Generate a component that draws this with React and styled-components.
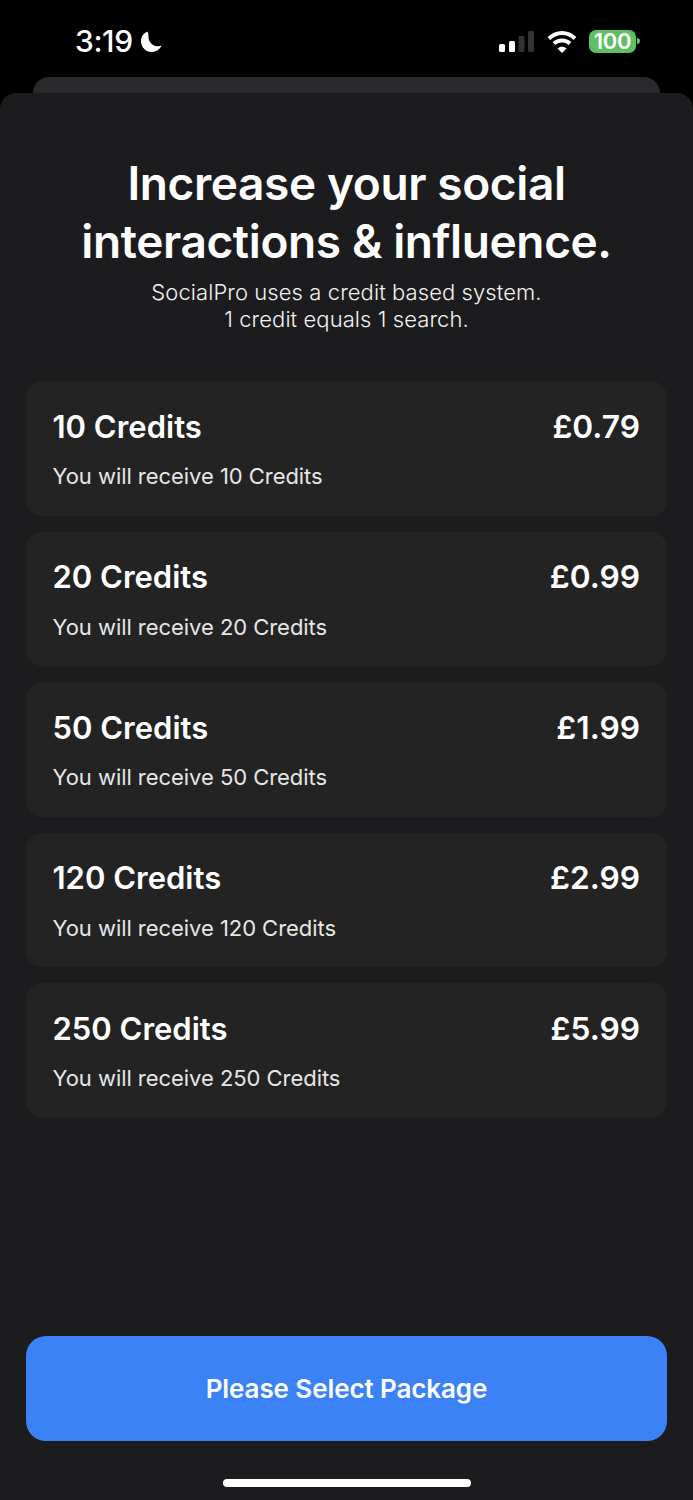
import React from 'react';
import styled, { createGlobalStyle } from 'styled-components';

const GlobalStyle = createGlobalStyle`
    html, body {
        margin: 0;
        padding: 0;
        background: #000;
    }
    * {
        box-sizing: border-box;
    }
`;

const Screen = styled.div`
    width: 693px;
    height: 1500px;
    display: flex;
    flex-direction: column;
    background: #000;
    font-family: Inter, "Liberation Sans", sans-serif;
    color: #fff;
    overflow: hidden;
`;

const StatusBar = styled.div`
    height: 77px;
    flex: none;
    display: flex;
    justify-content: space-between;
    padding: 25px 53px 0 75px;
`;

const StatusLeft = styled.div`
    display: flex;
    align-items: center;
    gap: 8px;
    height: 32px;
`;

const Time = styled.div`
    font-size: 30px;
    font-weight: 500;
    letter-spacing: -0.4px;
`;

const StatusRight = styled.div`
    display: flex;
    align-items: center;
    height: 32px;
    gap: 12.5px;
`;

const Battery = styled.div`
    display: flex;
    align-items: center;
    gap: 1px;
`;

const BatteryBody = styled.div`
    width: 47px;
    height: 23px;
    border-radius: 7px;
    background: #5ec062;
    font-size: 22px;
    font-weight: 600;
    line-height: 23px;
    text-align: center;
    letter-spacing: -0.3px;
`;

const BatteryCap = styled.div`
    width: 3px;
    height: 6px;
    border-radius: 0 3px 3px 0;
    background: #5ec062;
`;

const BackSheet = styled.div`
    height: 16px;
    flex: none;
    margin: 0 33px;
    background: #2a2a2c;
    border-radius: 16px 16px 0 0;
`;

const Sheet = styled.div`
    flex: 1;
    display: flex;
    flex-direction: column;
    background: #1c1c1e;
    border-radius: 16px 16px 0 0;
    padding: 61px 26px 0;
`;

const Title = styled.h1`
    margin: 0;
    font-size: 46px;
    font-weight: 600;
    line-height: 58px;
    text-align: center;
    letter-spacing: -0.38px;
`;

const Subtitle = styled.p`
    margin: 8.5px 0 0;
    font-size: 22px;
    font-weight: 300;
    line-height: 27.5px;
    text-align: center;
    letter-spacing: 0.08px;
    color: #f2f2f2;
`;

const Packages = styled.div`
    margin-top: 47.5px;
    display: flex;
    flex-direction: column;
    gap: 16px;
`;

const PackageCard = styled.div`
    height: 134.5px;
    padding: 25px 27px 0 26.5px;
    background: #232323;
    border-radius: 16px;
`;

const PackageTop = styled.div`
    display: flex;
    justify-content: space-between;
    align-items: center;
    height: 40px;
    font-size: 31px;
    font-weight: 600;
`;

const PackagePrice = styled.span`
    font-size: 31.7px;
`;

const PackageNote = styled.div`
    margin-top: 15px;
    font-size: 22px;
    font-weight: 400;
    line-height: 30px;
    letter-spacing: -0.05px;
    color: #e6e6e6;
`;

const SelectButton = styled.button`
    display: block;
    width: 100%;
    height: 105px;
    margin-top: auto;
    border: 0;
    border-radius: 20px;
    background: #3b82f6;
    color: #fff;
    font-family: inherit;
    font-size: 26px;
    font-weight: 600;
    letter-spacing: -0.1px;
`;

const HomeBarWrap = styled.div`
    height: 59px;
    flex: none;
    display: flex;
    justify-content: center;
    padding-top: 38px;
`;

const HomeBar = styled.div`
    width: 248px;
    height: 8px;
    border-radius: 4px;
    background: #fff;
`;

const Moon = () => (
    <svg width="21" height="21" viewBox="0 0 21 21">
        <path fill="#fff" d="M6.5 .5C2.6 2 0 5.8 0 10.2 0 16 4.7 21 10.5 21c4.500 0 8.400-2.700 10.200-6.500-1.100.5-2.400.8-3.700.8-5.400 0-9.500-4.300-9.500-9.600 0-1.800-.1-3.600-1-5.200z" />
    </svg>
);

const Signal = () => (
    <svg width="35" height="21" viewBox="0 0 35 21">
        <rect x="0" y="13" width="6" height="8" rx="1.5" fill="#fff" />
        <rect x="10" y="10" width="6" height="11" rx="1.5" fill="#fff" />
        <rect x="19.5" y="5" width="6" height="16" rx="1.5" fill="#333" />
        <rect x="29" y="0" width="6" height="21" rx="1.5" fill="#333" />
    </svg>
);

const Wifi = () => (
    <svg width="30" height="23" viewBox="0 0 30 23" fill="none" stroke="#fff" strokeWidth="4">
        <path d="M2 8.5C9.5 1 20.5 1 28 8.5" />
        <path d="M7 13.5C11.5 9.5 18.5 9.5 23 13.5" />
        <path fill="#fff" stroke="none" d="M15 23l-4.500-4.500c2.500-2.300 6.500-2.300 9 0z" />
    </svg>
);

const packages = [
    { credits: 10, price: '£0.79' },
    { credits: 20, price: '£0.99' },
    { credits: 50, price: '£1.99' },
    { credits: 120, price: '£2.99' },
    { credits: 250, price: '£5.99' },
];

export default function App() {
    return (
        <Screen>
            <GlobalStyle />
            <StatusBar>
                <StatusLeft>
                    <Time>3:19</Time>
                    <Moon />
                </StatusLeft>
                <StatusRight>
                    <Signal />
                    <Wifi />
                    <Battery>
                        <BatteryBody>100</BatteryBody>
                        <BatteryCap />
                    </Battery>
                </StatusRight>
            </StatusBar>
            <BackSheet />
            <Sheet>
                <Title>Increase your social<br />interactions &amp; influence.</Title>
                <Subtitle>SocialPro uses a credit based system.<br />1 credit equals 1 search.</Subtitle>
                <Packages>
                    {packages.map(p => (
                        <PackageCard key={p.credits}>
                            <PackageTop>
                                <span>{p.credits} Credits</span>
                                <PackagePrice>{p.price}</PackagePrice>
                            </PackageTop>
                            <PackageNote>You will receive {p.credits} Credits</PackageNote>
                        </PackageCard>
                    ))}
                </Packages>
                <SelectButton>Please Select Package</SelectButton>
                <HomeBarWrap>
                    <HomeBar />
                </HomeBarWrap>
            </Sheet>
        </Screen>
    );
}
